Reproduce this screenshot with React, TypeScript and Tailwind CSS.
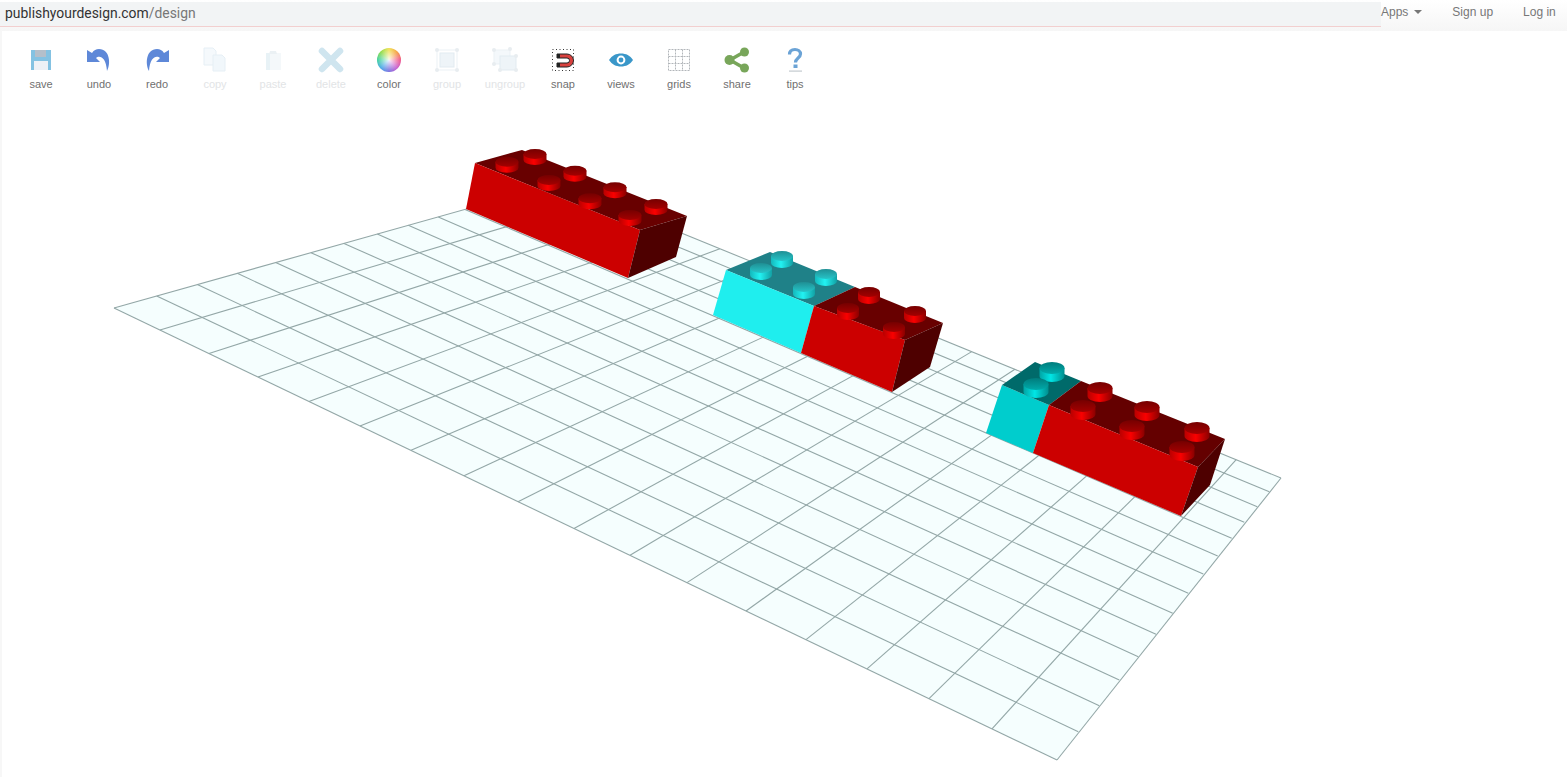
import React from "react";

type P = [number, number];
const pts = (a: P[]) => a.map((p) => p.join(",")).join(" ");

const LEFT: P = [114, 308], TOP: P = [559, 183], RIGHT: P = [1281, 478], BOTTOM: P = [1057, 760];

// where the grid lines meet the floor's four edges, read off the picture
const blX = [114, 160, 209, 258, 309, 360, 411, 464, 518, 574, 630, 687, 746, 806, 867, 929, 992, 1057];
const tlX = [114, 156.7, 197.3, 237.3, 275.7, 311, 344, 377.3, 408.3, 438.3, 465, 491, 516, 538, 559];
const brP: P[] = [
  [1057, 760], [1078.3, 731.7], [1099.3, 705.7], [1119.3, 680], [1138.3, 656.7], [1156, 634.3], [1172.7, 613.3], [1188.3, 593.3],
  [1203.3, 574], [1217.7, 556], [1231.7, 538.3], [1244.3, 522.3], [1257.3, 506.7], [1269.3, 491.7], [1281, 478],
];

function Floor() {
  const lines: React.ReactNode[] = [];
  blX.forEach((x, i) => {
    const y = 308 + (x - 114) * (452 / 943);
    const tx = i === 17 ? 1281 : 559 + 39.7 * i + 0.175 * i * (i - 1);
    const ty = 183 + (tx - 559) * (295 / 722);
    lines.push(<line key={"a" + i} x1={x} y1={y} x2={tx} y2={ty} />);
  });
  tlX.forEach((x, i) => {
    const y = 308 - (x - 114) * (125 / 445);
    lines.push(<line key={"b" + i} x1={x} y1={y} x2={brP[i][0]} y2={brP[i][1]} />);
  });
  return (
    <g>
      <polygon points={pts([LEFT, BOTTOM, RIGHT, TOP])} fill="#f5fefe" />
      <g stroke="#93a7a7" strokeWidth={1.1}>{lines}</g>
    </g>
  );
}

type Kind = "red" | "cyan" | "teal";
function Stud({ cx, cy, kind, rx, ry, h }: { cx: number; cy: number; kind: Kind; rx: number; ry: number; h: number }) {
  return (
    <g>
      <path
        d={`M${cx - rx} ${cy} L${cx - rx} ${cy + h} A${rx} ${ry} 0 0 0 ${cx + rx} ${cy + h} L${cx + rx} ${cy} Z`}
        fill={`url(#side-${kind})`}
      />
      <ellipse cx={cx} cy={cy} rx={rx} ry={ry} fill={`url(#top-${kind})`} />
    </g>
  );
}

function Studs({ at, kind, rx, ry, h }: { at: P[]; kind: Kind; rx: number; ry: number; h: number }) {
  return (
    <g>
      {at.map(([x, y]) => (
        <Stud key={x} cx={x} cy={y} kind={kind} rx={rx} ry={ry} h={h} />
      ))}
    </g>
  );
}

function Grad({ id, a, b, c }: { id: string; a: string; b: string; c: string }) {
  return (
    <linearGradient id={id} x1="0" x2="1" y1="0" y2="0">
      <stop offset="0" stopColor={a} /><stop offset="0.45" stopColor={b} /><stop offset="1" stopColor={c} />
    </linearGradient>
  );
}
function TopGrad({ id, a, b }: { id: string; a: string; b: string }) {
  return (
    <linearGradient id={id} x1="0" x2="0" y1="0" y2="1">
      <stop offset="0" stopColor={a} /><stop offset="1" stopColor={b} />
    </linearGradient>
  );
}

function Bricks() {
  return (
    <g>
      <defs>
        <Grad id="side-red" a="#b80000" b="#fa0000" c="#8a0000" />
        <Grad id="side-cyan" a="#14b8bc" b="#22f2f2" c="#12a0a4" />
        <Grad id="side-teal" a="#00a4a4" b="#00e6e6" c="#008e8e" />
        <TopGrad id="top-red" a="#760000" b="#a40000" />
        <TopGrad id="top-cyan" a="#1f8f94" b="#26c4c8" />
        <TopGrad id="top-teal" a="#007c7c" b="#00aaaa" />
      </defs>

      {/* brick 1 */}
      <polygon points={pts([[475, 163], [640, 230], [687, 216], [522, 150]])} fill="#680000" />
      <polygon points={pts([[475, 163], [466, 209], [628, 278], [640, 230]])} fill="#cc0000" />
      <polygon points={pts([[640, 230], [628, 278], [676, 257], [687, 216]])} fill="#4e0000" />
      <Studs kind="red" rx={11.5} ry={5} h={6} at={[[535, 154], [507, 161.7], [575, 170.7], [549, 180], [615, 187.3], [590, 198.3], [656, 204], [630, 215]]} />

      {/* brick 2 */}
      <polygon points={pts([[726, 270], [814, 306], [855, 287], [770, 252]])} fill="#1f8188" />
      <polygon points={pts([[726, 270], [713, 315], [801, 353], [814, 306]])} fill="#1feeee" />
      <Studs kind="cyan" rx={11} ry={5} h={7} at={[[782, 256], [761, 268], [826, 274], [804, 287]]} />
      <polygon points={pts([[814, 306], [905, 340], [943, 323], [855, 287]])} fill="#680000" />
      <polygon points={pts([[814, 306], [801, 353], [892, 392], [905, 340]])} fill="#cc0000" />
      <polygon points={pts([[905, 340], [892, 392], [930, 367], [943, 323]])} fill="#4e0000" />
      <Studs kind="red" rx={11} ry={5} h={7} at={[[869, 292], [848, 308], [915, 311], [894, 327]]} />

      {/* brick 3 */}
      <polygon points={pts([[1002, 385], [986, 433], [1033, 453], [1049, 405]])} fill="#00cdcd" />
      <polygon points={pts([[1002, 385], [1049, 405], [1081, 381], [1035, 362]])} fill="#006a6a" />
      <Studs kind="teal" rx={12.5} ry={6} h={8} at={[[1052, 368], [1036, 384]]} />
      <polygon points={pts([[1049, 405], [1198, 467], [1225, 439], [1081, 381]])} fill="#640000" />
      <polygon points={pts([[1049, 405], [1033, 453], [1181, 516], [1198, 467]])} fill="#cc0000" />
      <polygon points={pts([[1198, 467], [1181, 516], [1210, 485], [1225, 439]])} fill="#4e0000" />
      <Studs kind="red" rx={12.5} ry={6} h={8} at={[[1100, 388], [1083, 406], [1147, 407], [1132, 426], [1197, 428], [1182, 447]]} />
    </g>
  );
}

const Ic = ({ children }: { children: React.ReactNode }) => (
  <svg width="28" height="28" viewBox="0 0 28 28" className="block">{children}</svg>
);

const icons: Record<string, React.ReactNode> = {
  save: (
    <Ic>
      <path d="M4 4h20v20H4z" fill="#84c2e2" />
      <path d="M8 4h11v7H8z" fill="#b4bfca" />
      <path d="M7 15h14v9H7z" fill="#eef1f6" />
    </Ic>
  ),
  undo: (
    <Ic>
      <path d="M2 4v12h13l-4-4c3-3 10-2 11 13 4-7 3-22-8-22-3 0-5 1-7 4z" fill="#5e88d8" />
    </Ic>
  ),
  redo: (
    <Ic>
      <path d="M26 4v12H13l4-4c-3-3-10-2-11 13C2 18 3 3 14 3c3 0 5 1 7 4z" fill="#5e88d8" />
    </Ic>
  ),
  copy: (
    <Ic>
      <path d="M3 2h9l3 3v14H3z" fill="#f5f9fc" stroke="#e6eff5" />
      <path d="M12 9h9l3 3v13H12z" fill="#f1f7fb" stroke="#e6eff5" />
    </Ic>
  ),
  paste: (
    <Ic>
      <path d="M7 7h15v17H7z" fill="#f4f8fa" />
      <path d="M7 7h4v17H7z" fill="#e8f2f6" />
      <path d="M11 5h6l1 3h-8z" fill="#ebf1f4" />
    </Ic>
  ),
  delete: (
    <Ic>
      <path d="M5 5l18 18M23 5L5 23" stroke="#cfe5ef" strokeWidth="6.5" strokeLinecap="round" />
    </Ic>
  ),
  group: (
    <Ic>
      <rect x="4" y="4" width="20" height="20" fill="none" stroke="#ebf1f5" />
      <rect x="7" y="7" width="14" height="14" fill="#eef4f8" stroke="#e2ebf1" />
      <g fill="#e8edf0">
        <circle cx="4" cy="4" r="2" /><circle cx="24" cy="4" r="2" /><circle cx="4" cy="24" r="2" /><circle cx="24" cy="24" r="2" />
      </g>
    </Ic>
  ),
  ungroup: (
    <Ic>
      <rect x="3" y="4" width="16" height="14" fill="#f4f8fb" stroke="#ebf1f5" />
      <rect x="9" y="10" width="16" height="14" fill="#eef4f8" stroke="#e2ebf1" />
      <g fill="#e8edf0">
        <circle cx="3" cy="4" r="2" /><circle cx="19" cy="3" r="2" /><circle cx="25" cy="10" r="2" /><circle cx="3" cy="18" r="2" /><circle cx="9" cy="24" r="2" /><circle cx="25" cy="24" r="2" />
      </g>
    </Ic>
  ),
  snap: (
    <Ic>
      <rect x="3.5" y="3.5" width="21" height="21" fill="none" stroke="#333" strokeDasharray="1 2.5" />
      <path d="M8 8h10a6.5 6.5 0 0 1 0 13H8v-4h10a2.5 2.5 0 0 0 0-5H8z" fill="#d8413e" stroke="#222" strokeWidth="1" />
      <path d="M8 8h3v4H8zM8 17h3v4H8z" fill="#222" />
    </Ic>
  ),
  views: (
    <Ic>
      <path d="M2 14c3-4.5 7-6.5 12-6.5s9 2 12 6.5c-3 4.5-7 6.5-12 6.5S5 18.5 2 14z" fill="#3a97c9" />
      <circle cx="14" cy="14" r="4.4" fill="#fff" />
      <circle cx="14" cy="14" r="2.4" fill="#3a97c9" />
    </Ic>
  ),
  grids: (
    <Ic>
      <path d="M3.5 3.5h21v21h-21zM10.5 3.5v21M17.5 3.5v21M3.5 10.5h21M3.5 17.5h21" fill="none" stroke="#b2b6ba" strokeWidth="1" strokeDasharray="2 1" />
    </Ic>
  ),
  share: (
    <Ic>
      <path d="M21 6L7 14l14 8" fill="none" stroke="#78a65a" strokeWidth="3.5" />
      <circle cx="21.5" cy="6" r="4.5" fill="#78a65a" />
      <circle cx="6.5" cy="14" r="5" fill="#78a65a" />
      <circle cx="21.5" cy="22" r="4.5" fill="#78a65a" />
    </Ic>
  ),
  tips: (
    <Ic>
      <path d="M8.5 8.5C8.5 5 11 3.5 14 3.5s5.5 1.7 5.5 4.5c0 4-5 4-5 8.5" fill="none" stroke="#6ba3d6" strokeWidth="3.2" />
      <rect x="12.5" y="18.5" width="4" height="3.5" fill="#6ba3d6" />
      <rect x="8" y="24.5" width="13" height="1.2" fill="#c4cacf" />
    </Ic>
  ),
};

const tools: [string, boolean][] = [
  ["save", true], ["undo", true], ["redo", true], ["copy", false], ["paste", false], ["delete", false], ["color", true],
  ["group", false], ["ungroup", false], ["snap", true], ["views", true], ["grids", true], ["share", true], ["tips", true],
];

export default function App() {
  return (
    <div className="relative h-[777px] w-[1567px] overflow-hidden bg-white font-['Liberation_Sans',sans-serif]">
      <svg width="1567" height="777" className="absolute inset-0">
        <Floor />
        <Bricks />
      </svg>
      <div className="absolute bottom-0 left-0 top-[31px] w-[2px] bg-[#f7f7f7]" />

      <header className="relative flex h-[31px] bg-gradient-to-b from-white to-[#f6f6f6]">
        <div className="mt-[2px] h-[25px] flex-1 border-b border-[#f2cfcf] bg-[#f2f4f5] pl-[5px] pt-[1px] font-['Roboto',sans-serif] text-[13.9px] leading-[20px] text-[#333]">
          publishyourdesign.com<span className="text-[#777]">/design</span>
        </div>
        <nav className="flex h-[24px] w-[186px] items-center text-[12px] text-[#777]">
          <span className="flex items-center gap-[6px]">
            Apps<span className="h-0 w-0 border-x-4 border-t-4 border-x-transparent border-t-[#777]" />
          </span>
          <span className="ml-[30px]">Sign up</span>
          <span className="ml-[30px]">Log in</span>
        </nav>
      </header>

      <div className="relative flex pl-[12px] pt-[15px]">
        {tools.map(([name, on]) => (
          <div key={name} className="flex w-[58px] flex-col items-center">
            <div className="flex h-[28px] items-center justify-center">
              {name === "color" ? (
                <div className="h-[24px] w-[24px] rounded-full bg-[conic-gradient(#f0e050,#f5a040,#f0568a,#c75fd0,#7a6fe0,#4aa8e8,#3fd0a0,#8fdc4a,#f0e050)]">
                  <div className="h-full w-full rounded-full bg-[radial-gradient(circle,rgba(255,255,255,0.9)_0%,rgba(255,255,255,0)_70%)]" />
                </div>
              ) : (
                icons[name]
              )}
            </div>
            <span className={`mt-[3px] text-[11px] leading-[14px] ${on ? "text-[#707070]" : "text-[#e2e4e6]"}`}>{name}</span>
          </div>
        ))}
      </div>
    </div>
  );
}
